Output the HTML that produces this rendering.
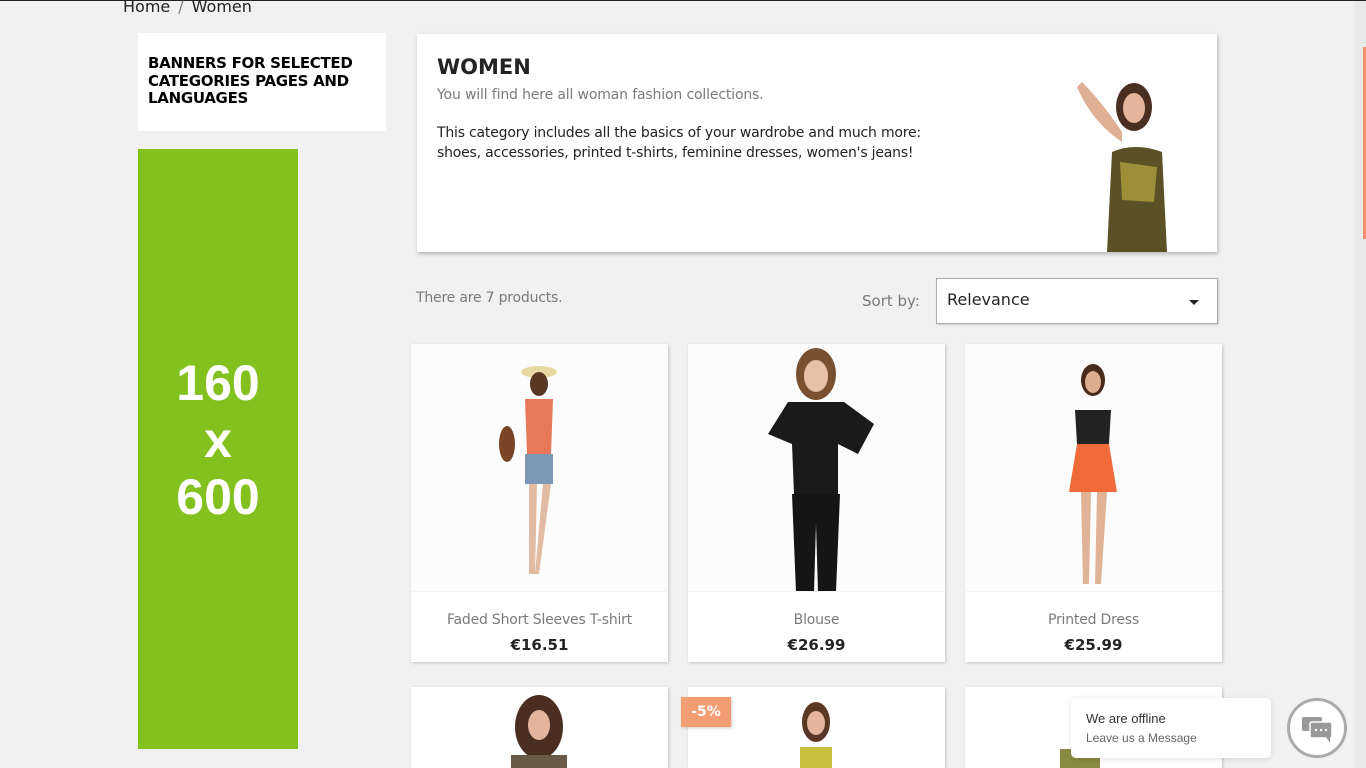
<!DOCTYPE html>
<html><head><meta charset="utf-8"><style>
*{margin:0;padding:0;box-sizing:border-box}
html{overflow:hidden;height:768px}
body{width:1366px;height:768px;overflow:hidden;background:#f1f1f1;font-family:"DejaVu Sans","Liberation Sans",sans-serif;position:relative}
.abs{position:absolute}
.topline{left:0;top:0;width:1366px;height:1px;background:#222}
.crumb{left:123px;top:-3px;font-size:16px;color:#232323}
.crumb span{color:#7a7a7a;margin:0 8px}
.bt{left:138px;top:33px;width:248px;height:98px;background:#fff;padding:22px 10px;font-weight:bold;font-size:15px;line-height:17.5px;color:#000;letter-spacing:-.3px}
.green{left:138px;top:149px;width:160px;height:600px;background:#83c21e;color:#fff;font-family:"Liberation Sans",sans-serif;font-weight:bold;font-size:50px;text-align:center;padding-top:206px;line-height:57px}
.hero{left:417px;top:34px;width:800px;height:218px;background:#fff;box-shadow:1px 2px 4px rgba(0,0,0,.25);padding:20px}
.hero h1{font-size:21px;font-weight:bold;color:#232323;margin-top:1px}
.hero .s{font-size:14px;color:#7a7a7a;margin-top:8px;letter-spacing:-.15px}
.hero .d{font-size:14px;color:#232323;margin-top:20px;line-height:20px;letter-spacing:-.2px}
.cnt{left:416px;top:290px;font-size:14px;color:#7a7a7a;letter-spacing:-.2px}
.sortl{left:862px;top:292px;font-size:15px;color:#7a7a7a}
.sel{left:936px;top:278px;width:282px;height:46px;background:#fff;border:1px solid #aaa;box-shadow:1px 1px 2px rgba(0,0,0,.15);font-size:16px;padding:11px 10px;color:#232323}
.sel i{position:absolute;right:18px;top:21px;border:5px solid transparent;border-top:5px solid #232323}
.card{width:257px;height:318px;background:#fff;box-shadow:1px 1px 3px rgba(0,0,0,.2)}
.card .img{height:248px;background:#fcfcfc;position:relative;overflow:hidden;border-bottom:1px solid #f3f3f3}
.card .n{text-align:center;font-size:14px;color:#7a7a7a;margin-top:20px;letter-spacing:-.2px}
.card .p{text-align:center;font-size:15px;font-weight:bold;color:#232323;margin-top:8px}
.chatb{left:1071px;top:698px;width:200px;height:60px;background:#fff;border-radius:5px;box-shadow:0 1px 6px rgba(0,0,0,.12);font-family:"Liberation Sans",sans-serif;padding:13px 15px}
.chatc{left:1287px;top:698px;width:60px;height:60px;border-radius:50%;border:3px solid #aaa;background:#fff}
</style></head><body>
<div class="abs topline"></div>
<div class="abs crumb">Home<span>/</span>Women</div>
<div class="abs bt">BANNERS FOR SELECTED CATEGORIES PAGES AND LANGUAGES</div>
<div class="abs green">160<br>x<br>600</div>
<div class="abs hero"><h1>WOMEN</h1><div class="s">You will find here all woman fashion collections.</div>
<div class="d">This category includes all the basics of your wardrobe and much more:<br>shoes, accessories, printed t-shirts, feminine dresses, women's jeans!</div>
<svg class="abs" style="left:645px;top:38px" width="140" height="180"><ellipse cx="72" cy="35" rx="18" ry="24" fill="#4a2e22"/><ellipse cx="72" cy="36" rx="11" ry="15" fill="#e2b59c"/><path d="M20 10 Q40 30 60 60 L60 70 Q30 50 15 15Z" fill="#e0b094"/><path d="M50 80 Q72 70 100 80 L105 180 L45 180Z" fill="#5a5226"/><path d="M58 90 L95 95 L92 130 L60 128Z" fill="#b9a840" opacity=".7"/></svg>
</div>
<div class="abs cnt">There are 7 products.</div>
<div class="abs sortl">Sort by:</div>
<div class="abs sel">Relevance<i></i></div>

<div class="abs card" style="left:411px;top:344px"><div class="img"><svg width="257" height="248"><ellipse cx="128" cy="28" rx="18" ry="6" fill="#e8d9a2"/><ellipse cx="128" cy="40" rx="9" ry="12" fill="#5a3624"/><path d="M114 55 L142 55 L140 110 L116 110Z" fill="#e8785a"/><ellipse cx="96" cy="100" rx="8" ry="18" fill="#7a4526"/><path d="M114 110 L142 110 L142 140 L114 140Z" fill="#7d98b4"/><path d="M118 140 L126 140 L124 230 L118 230Z M132 140 L140 140 L128 230 L124 230Z" fill="#e2bba3"/></svg></div><div class="n">Faded Short Sleeves T-shirt</div><div class="p">€16.51</div></div>
<div class="abs card" style="left:688px;top:344px"><div class="img"><svg width="257" height="248"><ellipse cx="128" cy="30" rx="20" ry="26" fill="#7a5130"/><ellipse cx="128" cy="32" rx="12" ry="16" fill="#e7c0a8"/><path d="M100 58 L156 58 L186 80 L170 110 L150 100 L150 150 L106 150 L104 100 L80 90 Z" fill="#1a1a1a"/><path d="M104 150 L152 150 L148 248 L130 248 L128 180 L126 248 L108 248Z" fill="#151515"/></svg></div><div class="n">Blouse</div><div class="p">€26.99</div></div>
<div class="abs card" style="left:965px;top:344px"><div class="img"><svg width="257" height="248"><ellipse cx="128" cy="36" rx="12" ry="16" fill="#4a2a1a"/><ellipse cx="128" cy="38" rx="8" ry="11" fill="#dcae90"/><path d="M110 66 L146 66 L144 100 L112 100Z" fill="#222"/><path d="M112 100 L144 100 L152 148 L104 148Z" fill="#f06a3a"/><path d="M116 148 L126 148 L124 240 L118 240Z M132 148 L142 148 L136 240 L130 240Z" fill="#e0b296"/></svg></div><div class="n">Printed Dress</div><div class="p">€25.99</div></div>

<div class="abs card" style="left:411px;top:687px;height:81px"><svg width="257" height="81"><ellipse cx="128" cy="40" rx="24" ry="32" fill="#4a2e22"/><ellipse cx="128" cy="38" rx="11" ry="15" fill="#e2b59c"/><rect x="100" y="68" width="56" height="20" fill="#6a5a48"/></svg></div>
<div class="abs card" style="left:688px;top:687px;height:81px"><svg width="257" height="81"><ellipse cx="128" cy="35" rx="14" ry="20" fill="#5a3624"/><ellipse cx="128" cy="36" rx="9" ry="12" fill="#e2b59c"/><rect x="112" y="60" width="32" height="24" fill="#c8c040"/></svg></div>
<div class="abs card" style="left:965px;top:687px;height:81px"><svg width="257" height="81"><rect x="95" y="62" width="40" height="24" fill="#8a8a40"/></svg></div>
<div class="abs" style="left:681px;top:697px;width:50px;height:30px;background:#f39d72;color:#fff;font-weight:bold;font-size:14px;text-align:center;line-height:30px;box-shadow:1px 1px 3px rgba(0,0,0,.2)">-5%</div>

<div class="abs chatb"><div style="font-size:13px;color:#333">We are offline</div><div style="font-size:12px;color:#666;margin-top:5px">Leave us a Message</div></div>
<div class="abs chatc"><svg width="54" height="54"><rect x="12" y="16" width="20" height="14" rx="2" fill="#999"/><rect x="20" y="21" width="22" height="16" rx="2" fill="#999" stroke="#fff" stroke-width="1.5"/><path d="M36 36 L40 42 L40 36Z" fill="#999"/><circle cx="26" cy="29" r="1.2" fill="#fff"/><circle cx="31" cy="29" r="1.2" fill="#fff"/><circle cx="36" cy="29" r="1.2" fill="#fff"/></svg></div>

<div class="abs" style="left:1355px;top:1px;width:11px;height:767px;background:#e9e9e9"></div>
<div class="abs" style="left:1363px;top:47px;width:3px;height:192px;background:#f0926a"></div>
</body></html>
